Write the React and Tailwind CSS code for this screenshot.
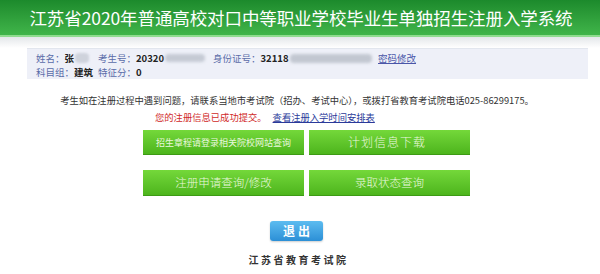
export default function App() {
  const font = { fontFamily: '"Noto Sans CJK SC", "Microsoft YaHei", sans-serif' };
  return (
    <div className="w-[600px] h-[274px] bg-white overflow-hidden whitespace-nowrap" style={font}>
      {/* header */}
      <div className="h-[37px] bg-gradient-to-b from-[#1c8a2c] to-[#40b54a] border-b-2 border-[#8fdc8f] flex items-center justify-center">
        <h1 className="text-white text-[17.5px] leading-none tracking-[-0.1px] pl-[2px]">
          江苏省2020年普通高校对口中等职业学校毕业生单独招生注册入学系统
        </h1>
      </div>
      <div className="h-[11px] bg-gradient-to-b from-[#e4e7ea] to-white" />

      {/* student info */}
      <div className="mx-[27px] w-[561px] h-[31px] bg-[#eef0f8] border-t border-[#e2e6ee] pl-[9px] pt-[2px] text-[9.5px] leading-[14px]">
        <div className="flex items-center h-[14px]">
          <span className="w-[62px] flex items-center">
            <span className="text-[#5a6ca8]">姓名：</span>
            <span className="font-bold text-[#222]">张</span>
            <span className="ml-[1px] w-[14px] h-[10px] rounded-sm bg-[#cfd3dc] blur-[1px]" />
          </span>
          <span className="w-[115px] flex items-center">
            <span className="text-[#5a6ca8]">考生号：</span>
            <span className="font-bold text-[#222]">20320</span>
            <span className="ml-[1px] w-[40px] h-[8px] rounded-sm bg-[#c5cad4] blur-[1.5px]" />
          </span>
          <span className="w-[165px] flex items-center">
            <span className="text-[#5a6ca8]">身份证号：</span>
            <span className="font-bold text-[#222]">32118</span>
            <span className="ml-[1px] w-[82px] h-[9px] rounded-sm bg-[#c2c7d1] blur-[1.5px]" />
          </span>
          <a href="#" className="text-[#4a56a8] underline">密码修改</a>
        </div>
        <div className="flex items-center h-[14px]">
          <span className="w-[62px]">
            <span className="text-[#5a6ca8]">科目组：</span>
            <span className="font-bold text-[#222]">建筑</span>
          </span>
          <span>
            <span className="text-[#5a6ca8]">特征分：</span>
            <span className="font-bold text-[#222]">0</span>
          </span>
        </div>
      </div>

      {/* notice */}
      <p className="mt-[14px] h-[14px] text-center text-[9.3px] leading-[14px] text-[#333] pr-[6px]">
        考生如在注册过程中遇到问题，请联系当地市考试院（招办、考试中心），或拨打省教育考试院电话025-86299175。
      </p>
      <div className="mt-[3px] h-[14px] pl-[155px] text-[9.3px] leading-[14px] flex">
        <span className="text-[#d02a2a]">您的注册信息已成功提交。</span>
        <a href="#" className="ml-[6px] text-[#2a3a9a] underline">查看注册入学时间安排表</a>
      </div>

      {/* buttons */}
      <div className="mt-[6px] ml-[143px] w-[327px] grid grid-cols-2 gap-x-[5px] gap-y-[15px]">
        <button className="h-[25px] leading-none bg-gradient-to-b from-[#74d83a] to-[#4db51c] border-b border-[#3d9a14] text-[#e8f7dc] text-[9px]">
          招生章程请登录相关院校网站查询
        </button>
        <button className="h-[25px] leading-none bg-gradient-to-b from-[#74d83a] to-[#4db51c] border-b border-[#3d9a14] text-[#eaf8df] text-[12px] tracking-[1px] font-light pr-[5px]">
          计划信息下载
        </button>
        <button className="h-[26px] leading-none bg-gradient-to-b from-[#74d83a] to-[#4db51c] border-b border-[#3d9a14] text-[#eaf8df] text-[11.5px] font-light">
          注册申请查询/修改
        </button>
        <button className="h-[26px] leading-none bg-gradient-to-b from-[#74d83a] to-[#4db51c] border-b border-[#3d9a14] text-[#eaf8df] text-[11.5px] font-light">
          录取状态查询
        </button>
      </div>

      {/* exit */}
      <div className="mt-[25px] flex justify-center pr-[7px]">
        <button className="w-[53px] h-[20px] leading-none rounded-[3px] bg-gradient-to-b from-[#5cbcf0] to-[#2b8fd6] text-white font-bold text-[12px] tracking-[3px] pl-[3px] shadow-[0_1px_2px_rgba(0,0,0,0.2)]">
          退出
        </button>
      </div>
      <div className="mt-[12px] h-[14px] leading-[14px] text-center text-[10px] font-bold tracking-[2.5px] text-[#333] pr-[3px]">
        江苏省教育考试院
      </div>
    </div>
  );
}
